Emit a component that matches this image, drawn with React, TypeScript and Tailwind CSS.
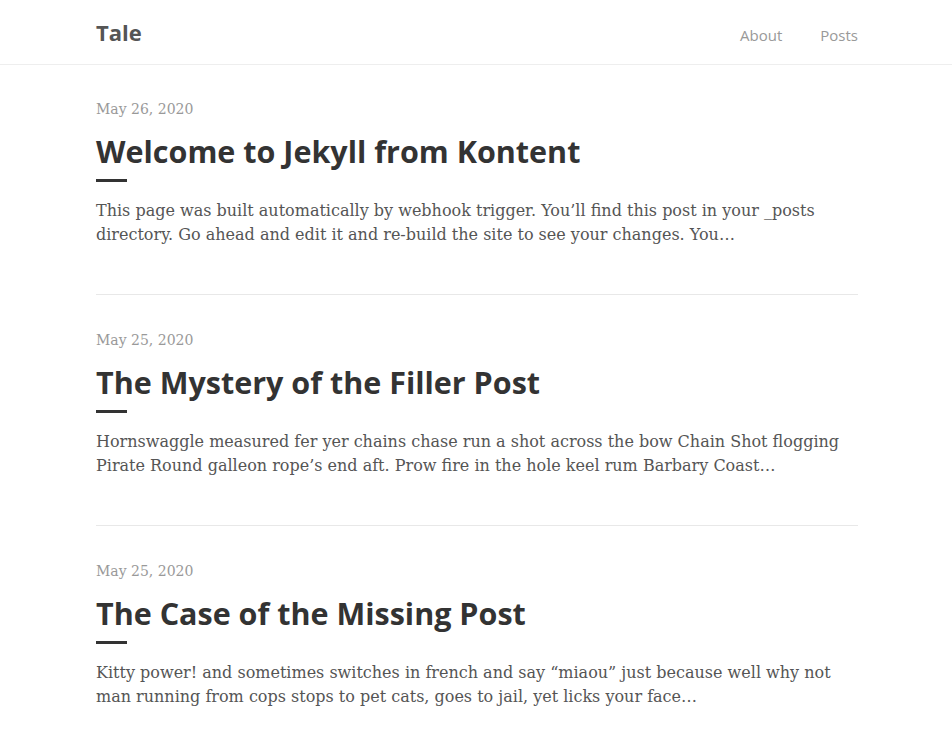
const posts = [
  {
    date: "May 26, 2020",
    title: "Welcome to Jekyll from Kontent",
    excerpt:
      "This page was built automatically by webhook trigger. You’ll find this post in your _posts directory. Go ahead and edit it and re-build the site to see your changes. You…",
  },
  {
    date: "May 25, 2020",
    title: "The Mystery of the Filler Post",
    excerpt:
      "Hornswaggle measured fer yer chains chase run a shot across the bow Chain Shot flogging Pirate Round galleon rope’s end aft. Prow fire in the hole keel rum Barbary Coast…",
  },
  {
    date: "May 25, 2020",
    title: "The Case of the Missing Post",
    excerpt:
      "Kitty power! and sometimes switches in french and say “miaou” just because well why not man running from cops stops to pet cats, goes to jail, yet licks your face…",
  },
];

export default function App() {
  return (
    <div className="min-h-screen bg-white">
      <nav className="border-b border-[#eee]">
        <div className="mx-auto flex h-16 w-[764px] items-center justify-between pl-[2px]">
          <a className="font-['Open_Sans',sans-serif] text-[22px] font-bold text-[#555]">Tale</a>
          <div className="flex gap-[38px] pt-[6px] font-['Open_Sans',sans-serif] text-[15px] text-[#999]">
            <a>About</a>
            <a>Posts</a>
          </div>
        </div>
      </nav>

      <main className="mx-auto w-[764px] pl-[2px] pt-[34px]">
        {posts.map((p, i) => (
          <article key={i} className={i > 0 ? "border-t border-[#e8e8e8] pt-[35px]" : ""}>
            <div className="font-['DejaVu_Serif',serif] text-[14px] text-[#999]">{p.date}</div>
            <h2 className="mt-[11px] font-['Open_Sans',sans-serif] text-[30.5px] font-bold leading-[40px] text-[#333]">
              {p.title}
            </h2>
            <div className="mt-[8px] h-[3px] w-[31px] bg-[#333]" />
            <p className="mt-[17px] pb-[47px] font-['DejaVu_Serif',serif] text-[16px] leading-[24px] text-[#555]">
              {p.excerpt}
            </p>
          </article>
        ))}
      </main>
    </div>
  );
}
